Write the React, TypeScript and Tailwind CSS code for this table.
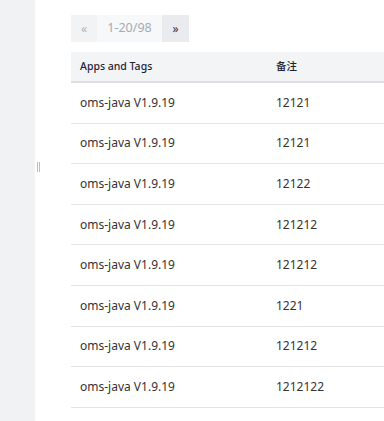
import React from 'react';

const rows = [
  { app: 'oms-java V1.9.19', note: '12121' },
  { app: 'oms-java V1.9.19', note: '12121' },
  { app: 'oms-java V1.9.19', note: '12122' },
  { app: 'oms-java V1.9.19', note: '121212' },
  { app: 'oms-java V1.9.19', note: '121212' },
  { app: 'oms-java V1.9.19', note: '1221' },
  { app: 'oms-java V1.9.19', note: '121212' },
  { app: 'oms-java V1.9.19', note: '1212122' },
  { app: 'oms-java V1.9.19', note: '121212' },
];

export default function App() {
  return (
    <div
      className="flex h-[421px] w-[384px] overflow-hidden bg-white text-[#333]"
      style={{ fontFamily: '"Noto Sans", "Noto Sans CJK SC", sans-serif' }}
    >
      {/* Sidebar */}
      <div className="w-[35px] shrink-0 bg-[#f1f2f4]" />

      {/* Resize handle */}
      <div className="w-[36px] shrink-0 pt-[162px] pl-[2px]">
        <div className="flex h-[10px] gap-[1px]">
          <div className="w-[1px] bg-[#b9bcc2]" />
          <div className="w-[1px] bg-[#b9bcc2]" />
        </div>
      </div>

      {/* Main */}
      <div className="flex-1 pt-[15px]">
        {/* Pagination */}
        <div className="flex h-[27px] text-[12px]">
          <button className="flex w-[26px] items-center justify-center bg-[#f2f3f5] text-[#a9b4c6]">
            «
          </button>
          <div className="flex w-[65px] items-center justify-center bg-[#f7f8f9] text-[12.5px] text-[#a4abb6]">
            1-20/98
          </div>
          <button className="flex w-[27px] items-center justify-center bg-[#e9ebee] text-[#2d3142]">
            »
          </button>
        </div>

        {/* Table */}
        <div className="mt-[10px] w-[400px]">
          <div className="flex h-[31px] items-center border-b-2 border-[#dcdee2] bg-[#f3f4f6] text-[10.5px] font-medium text-[#1f2433]">
            <div className="w-[196px] pl-[9px]">Apps and Tags</div>
            <div className="pl-[9px]">备注</div>
          </div>
          {rows.map((r, i) => (
            <div
              key={i}
              className="flex h-[40.6px] items-center border-b border-[#e3e4e7] text-[12px] text-[#333]"
            >
              <div className="w-[196px] pl-[9px]">{r.app}</div>
              <div className="pl-[9px]">{r.note}</div>
            </div>
          ))}
        </div>
      </div>
    </div>
  );
}
